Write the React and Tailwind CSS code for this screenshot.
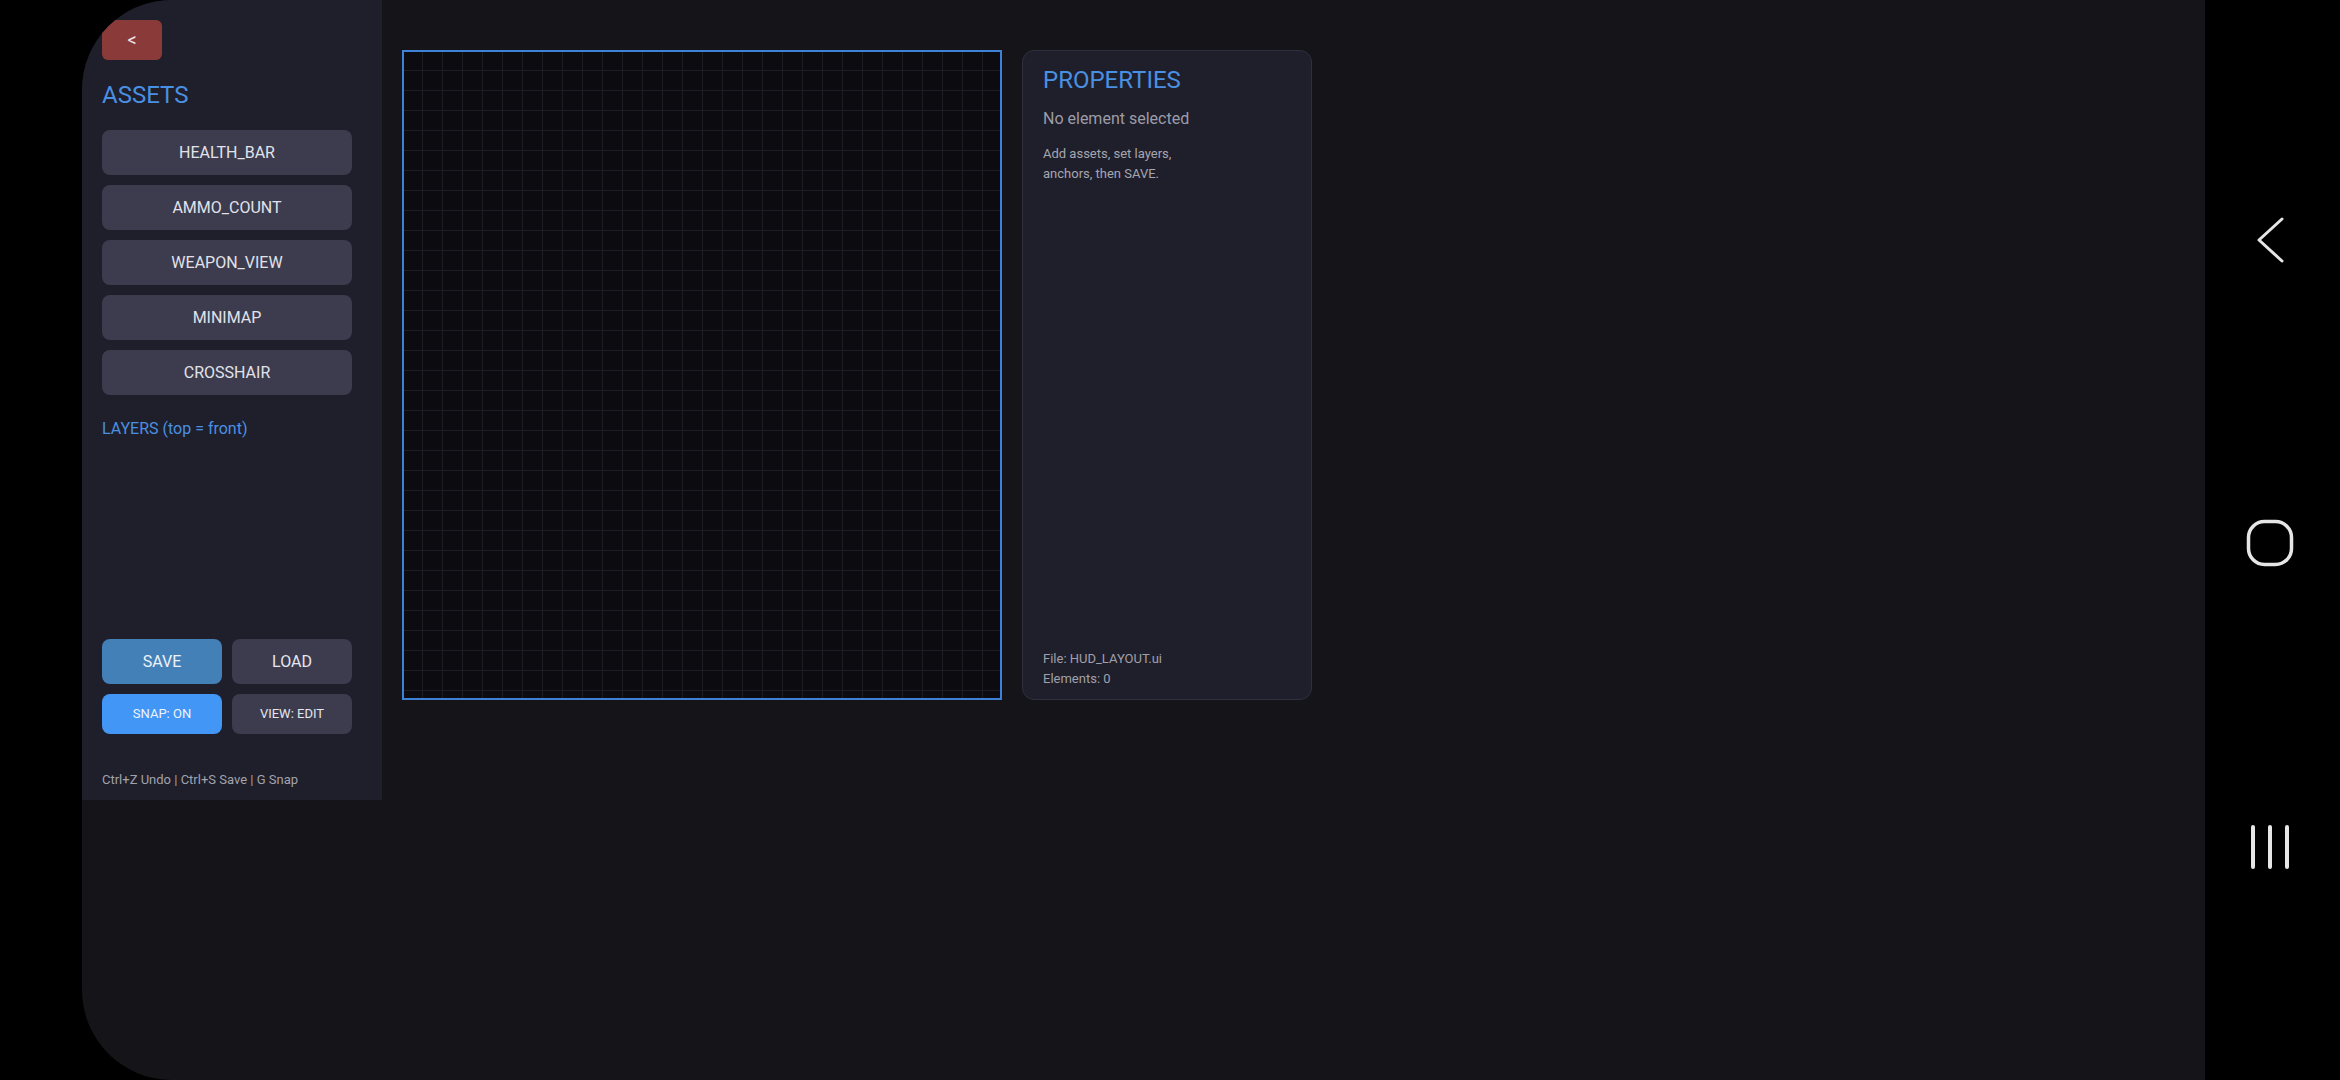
import React from 'react';

const assets = ['HEALTH_BAR', 'AMMO_COUNT', 'WEAPON_VIEW', 'MINIMAP', 'CROSSHAIR'];

const NavBar = () => (
  <div className="w-[135px] h-full bg-black flex flex-col items-center pt-[217px] pr-[5px]">
    {/* back */}
    <svg width="30" height="46" viewBox="0 0 30 46" fill="none">
      <path d="M27 2 L4 23 L27 44" stroke="#e6e6e6" strokeWidth="3" strokeLinecap="round" strokeLinejoin="round" />
    </svg>
    {/* home */}
    <svg className="mt-[256px]" width="48" height="48" viewBox="0 0 48 48" fill="none">
      <rect x="2.5" y="2.5" width="43" height="43" rx="16" stroke="#e6e6e6" strokeWidth="3.5" />
    </svg>
    {/* recents */}
    <svg className="mt-[257px]" width="42" height="46" viewBox="0 0 42 46" fill="none">
      <path d="M4 3 V43 M21 3 V43 M38 3 V43" stroke="#e6e6e6" strokeWidth="4" strokeLinecap="round" />
    </svg>
  </div>
);

const Sidebar = () => (
  <aside className="w-[300px] h-[800px] shrink-0 bg-[#1f1f2b] pl-5 pr-[30px] pt-5 flex flex-col">
    <button className="w-[60px] h-10 rounded-md bg-[#8b3a3a] text-[#f0e6e6] text-lg leading-none">&lt;</button>
    <h2 className="mt-[19px] text-[24px] leading-8 text-[#4a90e2]">ASSETS</h2>
    <div className="mt-[19px] flex flex-col gap-[10px]">
      {assets.map((name) => (
        <button
          key={name}
          className="h-[45px] w-full rounded-lg bg-[#3c3c4e] text-[16px] text-[#e2e2ea]"
        >
          {name}
        </button>
      ))}
    </div>
    <div className="mt-[22px] text-[16px] leading-6 text-[#4a90e2]">LAYERS (top = front)</div>
    <div className="flex-1" />
    <div className="grid grid-cols-2 gap-[10px]">
      <button className="h-[45px] rounded-lg bg-[#4480b8] text-[16px] text-[#eef2f8]">SAVE</button>
      <button className="h-[45px] rounded-lg bg-[#3c3c4e] text-[16px] text-[#e6e6ee]">LOAD</button>
      <button className="h-10 rounded-lg bg-[#4296f5] text-[13px] text-[#eef4fc]">SNAP: ON</button>
      <button className="h-10 rounded-lg bg-[#3c3c4e] text-[13px] text-[#e6e6ee]">VIEW: EDIT</button>
    </div>
    <p className="mt-[36px] mb-[10px] text-[13px] leading-5 text-[#a2a2ac]">Ctrl+Z Undo | Ctrl+S Save | G Snap</p>
  </aside>
);

const Canvas = () => (
  <div className="w-[600px] h-[650px] shrink-0 border-2 border-[#3d82d6] bg-[#0c0c10] bg-[linear-gradient(to_right,#1d1d24_1px,transparent_1px),linear-gradient(to_bottom,#1d1d24_1px,transparent_1px)] bg-[size:20px_20px] bg-[position:18px_18px]" />
);

const Properties = () => (
  <div className="w-[290px] h-[650px] shrink-0 rounded-xl border border-[#2f2f3f] bg-[#1f1f2b] px-5 pt-[13px] pb-[10px] flex flex-col">
    <h2 className="text-[24px] leading-8 text-[#4a90e2]">PROPERTIES</h2>
    <div className="mt-[11px] text-[16px] leading-6 text-[#9c9ca8]">No element selected</div>
    <p className="mt-[13px] text-[13px] leading-5 text-[#a6a6b0]">
      Add assets, set layers,
      <br />
      anchors, then SAVE.
    </p>
    <div className="flex-1" />
    <div className="text-[13px] leading-5 text-[#a0a0aa]">
      <div>File: HUD_LAYOUT.ui</div>
      <div>Elements: 0</div>
    </div>
  </div>
);

export default function App() {
  return (
    <div className="w-[2340px] h-[1080px] bg-black flex font-['Roboto',sans-serif] overflow-hidden">
      <div className="w-[82px] shrink-0" />
      <div className="flex-1 h-full bg-[#141419] rounded-l-[90px] overflow-hidden flex items-start">
        <Sidebar />
        <div className="pl-5 pt-[50px] flex gap-5">
          <Canvas />
          <Properties />
        </div>
      </div>
      <NavBar />
    </div>
  );
}
